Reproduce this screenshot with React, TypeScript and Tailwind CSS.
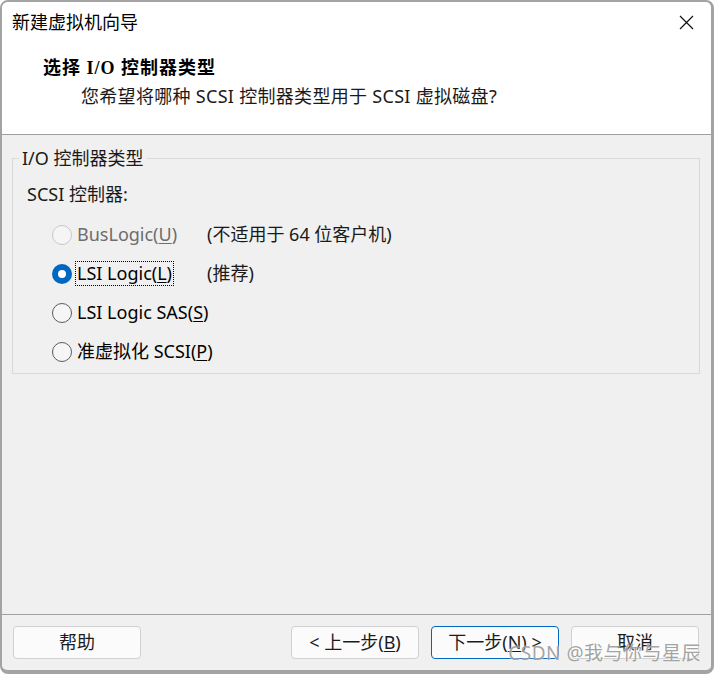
import { useState } from 'react';

const sans = "font-['Noto_Sans','Noto_Sans_CJK_SC',sans-serif]";

interface RadioOption {
  id: string;
  label: string;
  key: string;
  note?: string;
  disabled?: boolean;
}

const options: RadioOption[] = [
  { id: 'buslogic', label: 'BusLogic(', key: 'U', note: '(不适用于 64 位客户机)', disabled: true },
  { id: 'lsi', label: 'LSI Logic(', key: 'L', note: '(推荐)' },
  { id: 'sas', label: 'LSI Logic SAS(', key: 'S' },
  { id: 'pvscsi', label: '准虚拟化 SCSI(', key: 'P' },
];

function Radio({ checked, disabled }: { checked: boolean; disabled?: boolean }) {
  if (checked) {
    return (
      <span className="w-[20px] h-[20px] rounded-full bg-[#0067c0] flex items-center justify-center shrink-0">
        <span className="w-[8px] h-[8px] rounded-full bg-white" />
      </span>
    );
  }
  return (
    <span
      className={
        disabled
          ? 'w-[20px] h-[20px] rounded-full border border-[#c8c8c8] bg-[#f5f5f5] shrink-0'
          : 'w-[20px] h-[20px] rounded-full border border-[#5c5c5c] bg-[#f6f6f6] shrink-0'
      }
    />
  );
}

function Button({ children, primary }: { children: React.ReactNode; primary?: boolean }) {
  return (
    <button
      className={
        primary
          ? 'w-[128px] h-[33px] rounded-[4px] bg-[#fbfbfb] border border-[#0067c0] text-[18px] text-[#1b1b1b] flex items-center justify-center'
          : 'w-[128px] h-[33px] rounded-[4px] bg-[#fbfbfb] border border-[#d0d0d0] text-[18px] text-[#1b1b1b] flex items-center justify-center'
      }
    >
      {children}
    </button>
  );
}

export default function App() {
  const [selected, setSelected] = useState('lsi');

  return (
    <div className={`w-[714px] h-[674px] bg-white ${sans}`}>
      <div className="relative w-full h-full flex flex-col overflow-hidden rounded-[8px] border-l-2 border-t-2 border-r-[3px] border-b-[4px] border-[#a3a3a3] bg-[#f0f0f0]">
        {/* header */}
        <div className="h-[132px] bg-white flex flex-col shrink-0">
          <div className="h-[40px] flex items-center justify-between pl-[10px] pr-[17px]">
            <span className="text-[18px] text-black">新建虚拟机向导</span>
            <svg width="15" height="15" viewBox="0 0 15 15" className="mt-[1px]">
              <path d="M1 1L14 14M14 1L1 14" stroke="#111" strokeWidth="1.2" fill="none" />
            </svg>
          </div>
          <div className="mt-[14px] pl-[41px] h-[24px] flex items-center text-[18px] font-bold tracking-[1px] text-black font-['Liberation_Serif','Noto_Sans_CJK_SC',serif]">
            选择 I/O 控制器类型
          </div>
          <div className="mt-[4px] pl-[79px] h-[24px] flex items-center text-[18px] tracking-[0.3px] text-[#1a1a1a]">
            您希望将哪种 SCSI 控制器类型用于 SCSI 虚拟磁盘?
          </div>
        </div>
        <div className="h-[1px] bg-[#a0a0a0] shrink-0" />

        {/* body */}
        <div className="flex-1 flex flex-col">
          <div className="relative mt-[23px] ml-[10px] mr-[11px] h-[216px] border border-[#d9d9d9]">
            <span className="absolute left-[6px] -top-[13px] px-[3px] bg-[#f0f0f0] text-[18px] leading-[24px] text-[#1a1a1a]">
              I/O 控制器类型
            </span>
            <div className="pt-[23px] pl-[14px] h-[24px] box-content flex items-center text-[18px] text-[#1a1a1a]">
              SCSI 控制器:
            </div>
            <div className="mt-[9px] flex flex-col">
              {options.map((o) => {
                const checked = selected === o.id;
                return (
                  <div
                    key={o.id}
                    className="h-[39px] flex items-center pl-[39px]"
                    onClick={() => !o.disabled && setSelected(o.id)}
                  >
                    <Radio checked={checked} disabled={o.disabled} />
                    <div className="ml-[5px] w-[130px] flex items-center">
                      <span
                        className={
                          checked
                            ? '-ml-[1px] h-[23px] px-[1px] flex items-center outline outline-1 outline-dotted outline-black text-[18px] text-black whitespace-nowrap'
                            : o.disabled
                              ? 'text-[18px] text-[#6d6d6d] whitespace-nowrap'
                              : 'text-[18px] text-black whitespace-nowrap'
                        }
                      >
                        {o.label}
                        <span className="underline underline-offset-2">{o.key}</span>)
                      </span>
                    </div>
                    {o.note && <span className="text-[18px] text-[#1a1a1a] whitespace-nowrap">{o.note}</span>}
                  </div>
                );
              })}
            </div>
          </div>
        </div>

        {/* footer */}
        <div className="h-[1px] bg-[#a0a0a0] shrink-0" />
        <div className="h-[55px] shrink-0 flex items-center pl-[11px] pr-[12px]">
          <Button>帮助</Button>
          <div className="flex-1" />
          <div className="flex gap-[12px]">
            <Button>
              &lt; 上一步(<span className="underline underline-offset-2">B</span>)
            </Button>
            <Button primary>
              下一步(<span className="underline underline-offset-2">N</span>) &gt;
            </Button>
            <Button>取消</Button>
          </div>
        </div>

        <span className="absolute right-[10px] bottom-[3px] text-[19px] tracking-[0.5px] text-[#8c8c8c]/80 pointer-events-none [text-shadow:0_0_2px_#ffffff]">
          CSDN @我与你与星辰
        </span>
      </div>
    </div>
  );
}
